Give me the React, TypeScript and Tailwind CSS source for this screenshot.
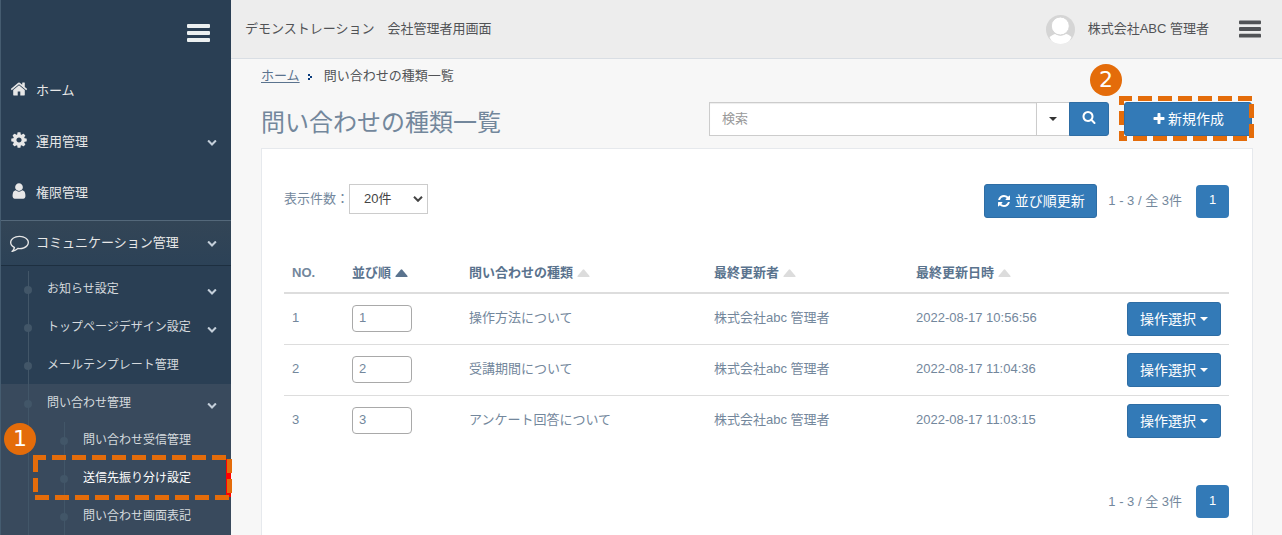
import { useState } from 'react';

const ICONS = {
  home: 'M1472 992v480q0 26-19 45t-45 19h-384v-384h-256v384h-384q-26 0-45-19t-19-45v-480q0-1 .5-3t.5-3l575-474 575 474q1 2 1 6zm223-69l-62 74q-8 9-21 11h-3q-13 0-21-7l-692-577-692 577q-12 8-24 7-13-2-21-11l-62-74q-8-10-7-23.5t11-21.5l719-599q32-26 76-26t76 26l244 204v-195q0-14 9-23t23-9h192q14 0 23 9t9 23v408l219 182q10 8 11 21.5t-7 23.5z',
  cog: 'M1152 896q0-106-75-181t-181-75-181 75-75 181 75 181 181 75 181-75 75-181zm512-109v222q0 12-8 23t-20 13l-185 28q-19 54-39 91 35 50 107 138 10 12 10 25t-9 23q-27 37-99 108t-94 71q-12 0-26-9l-138-108q-44 23-91 38-16 136-29 186-7 28-36 28h-222q-14 0-24.5-8.5t-11.5-21.5l-28-184q-49-16-90-37l-141 107q-10 9-25 9-14 0-25-11-126-114-165-168-7-10-7-23 0-12 8-23 15-21 51-66.5t54-70.5q-27-50-41-99l-183-27q-13-2-21-12.5t-8-23.5v-222q0-12 8-23t19-13l186-28q14-46 39-92-40-57-107-138-10-12-10-24 0-10 9-23 26-36 98.5-107.5t94.5-71.5q13 0 26 10l138 107q44-23 91-38 16-136 29-186 7-28 36-28h222q14 0 24.5 8.5t11.5 21.5l28 184q49 16 90 37l142-107q9-9 24-9 13 0 25 10 129 119 165 170 7 8 7 22 0 12-8 23-15 21-51 66.5t-54 70.5q26 50 41 98l183 28q13 2 21 12.5t8 23.5z',
  user: 'M1536 1399q0 109-62.5 187t-150.5 78h-854q-88 0-150.5-78t-62.5-187q0-85 8.5-160.5t31.5-152 58.5-131 94-89 134.5-34.5q131 128 313 128t313-128q76 0 134.5 34.5t94 89 58.5 131 31.5 152 8.5 160.5zm-256-887q0 159-112.5 271.5t-271.5 112.5-271.5-112.5-112.5-271.5 112.5-271.5 271.5-112.5 271.5 112.5 112.5 271.5z',
  comment: 'M896 384q-204 0-381.5 69.5t-282 187.5-104.5 255q0 112 71.5 213.5t201.5 175.5l87 50-27 96q-24 91-70 172 152-63 275-171l43-38 57 6q69 8 130 8 204 0 381.5-69.5t282-187.5 104.5-255-104.5-255-282-187.5-381.5-69.5zm896 512q0 174-120 321.5t-326 233-450 85.5q-70 0-145-8-198 175-460 242-49 14-114 22h-5q-15 0-27-10.5t-16-27.5v-1q-3-4-.5-12t2-10 4.5-9.5l6-9 7-8.5 8-9q7-8 31-34.5t34.5-38 31-39.5 32.5-51 27-59 26-76q-157-89-247.5-220t-90.5-281q0-130 71-248.5t191-204.5 286-136.5 348-50.5 348 50.5 286 136.5 191 204.5 71 248.5z',
  chevron: 'M1683 808l-742 741q-19 19-45 19t-45-19l-742-741q-19-19-19-45.5t19-45.5l166-165q19-19 45-19t45 19l531 531 531-531q19-19 45-19t45 19l166 165q19 19 19 45.5t-19 45.5z',
  search: 'M1216 832q0-185-131.5-316.5t-316.5-131.5-316.5 131.5-131.5 316.5 131.5 316.5 316.5 131.5 316.5-131.5 131.5-316.5zm512 832q0 52-38 90t-90 38q-54 0-90-38l-343-342q-179 124-399 124-143 0-273.5-55.5t-225-150-150-225-55.5-273.5 55.5-273.5 150-225 225-150 273.5-55.5 273.5 55.5 225 150 150 225 55.5 273.5q0 220-124 399l343 343q37 37 37 90z',
  refresh: 'M1639 1056q0 5-1 7-64 268-268 434.5t-478 166.5q-146 0-282.5-55t-243.5-157l-129 129q-19 19-45 19t-45-19-19-45v-448q0-26 19-45t45-19h448q26 0 45 19t19 45-19 45l-137 137q71 66 161 102t187 36q134 0 250-65t186-179q11-17 53-117 8-23 30-23h192q13 0 22.5 9.5t9.5 22.5zm25-800v448q0 26-19 45t-45 19h-448q-26 0-45-19t-19-45 19-45l138-138q-148-137-349-137-134 0-250 65t-186 179q-11 17-53 117-8 23-30 23h-199q-13 0-22.5-9.5t-9.5-22.5v-7q65-268 270-434.5t480-166.5q146 0 284 55.5t245 156.5l130-129q19-19 45-19t45 19 19 45z',
  plus: 'M1600 736v192q0 40-28 68t-68 28h-416v416q0 40-28 68t-68 28h-192q-40 0-68-28t-28-68v-416h-416q-40 0-68-28t-28-68v-192q0-40 28-68t68-28h416v-416q0-40 28-68t68-28h192q40 0 68 28t28 68v416h416q40 0 68 28t28 68z',
};

type IconName = keyof typeof ICONS;

function Icon({ name, className }: { name: IconName; className?: string }) {
  return (
    <svg viewBox="0 0 1792 1792" fill="currentColor" className={className} aria-hidden="true">
      <path d={ICONS[name]} />
    </svg>
  );
}

function Bars({ className }: { className?: string }) {
  return (
    <svg viewBox="0 0 23 18" fill="currentColor" className={className} aria-hidden="true">
      <rect width="23" height="4" rx="1" />
      <rect y="7" width="23" height="4" rx="1" />
      <rect y="14" width="23" height="4" rx="1" />
    </svg>
  );
}

const mainMenu: { icon: IconName; label: string; open?: boolean }[] = [
  { icon: 'home', label: 'ホーム' },
  { icon: 'cog', label: '運用管理', open: true },
  { icon: 'user', label: '権限管理' },
];

const subMenu = [
  { label: 'お知らせ設定', arrow: true },
  { label: 'トップページデザイン設定', arrow: true },
  { label: 'メールテンプレート管理', arrow: false },
];

const inquiryMenu = ['問い合わせ受信管理', '送信先振り分け設定', '問い合わせ画面表記'];

const rows = [
  { no: 1, type: '操作方法について', user: '株式会社abc 管理者', date: '2022-08-17 10:56:56' },
  { no: 2, type: '受講期間について', user: '株式会社abc 管理者', date: '2022-08-17 11:04:36' },
  { no: 3, type: 'アンケート回答について', user: '株式会社abc 管理者', date: '2022-08-17 11:03:15' },
];

function Dot({ className }: { className: string }) {
  return <span className={`absolute top-1/2 size-2 -translate-y-[3px] rounded-full bg-[#425668] ${className}`} />;
}

function Sidebar() {
  return (
    <nav className="flex w-[231px] shrink-0 flex-col border-l border-[#455c70] bg-[#2a3f54] text-[#e7e7e7]">
      <div className="flex h-[65px] shrink-0 justify-end pt-6 pr-[21px]">
        <Bars className="h-[18px] w-[23px] text-[#ecf0f1]" />
      </div>

      {mainMenu.map((item) => (
        <div key={item.label} className="flex h-[51px] shrink-0 items-center pr-[14px] pl-[9px] text-[13px]">
          <Icon name={item.icon} className="-mt-1 size-[18px]" />
          <span className="ml-2 flex-1">{item.label}</span>
          {item.open && <Icon name="chevron" className="size-2.5 text-[#c4cfda]" />}
        </div>
      ))}

      <div className="mt-[2px] flex h-[46px] shrink-0 items-center border-t border-b border-t-[#54687a] border-b-[#1d2f40] bg-linear-to-b from-[#334556] to-[#2c4257] pr-[14px] pl-[9px] text-[13px]">
        <Icon name="comment" className="-mt-0.5 size-[19px]" />
        <span className="ml-[7px] flex-1">コミュニケーション管理</span>
        <Icon name="chevron" className="size-2.5 text-[#c4cfda]" />
      </div>

      <div className="relative mt-1 flex-1 text-xs text-[#d5dade]">
        {subMenu.map((item) => (
          <div key={item.label} className="relative flex h-[38px] items-center pr-[14px] pl-[46px]">
            <Dot className="left-[23px]" />
            <span className="flex-1">{item.label}</span>
            {item.arrow && <Icon name="chevron" className="mt-1 size-2.5 text-[#c4cfda]" />}
          </div>
        ))}
        <div className="bg-[#394a5d]">
          <div className="relative flex h-[37px] items-center pr-[14px] pl-[46px]">
            <Dot className="left-[23px]" />
            <span className="flex-1">問い合わせ管理</span>
            <Icon name="chevron" className="mt-1 size-2.5 text-[#c4cfda]" />
          </div>
          <div className="relative">
            {inquiryMenu.map((label, i) => (
              <div
                key={label}
                className={
                  i === 1
                    ? 'relative flex h-[38px] items-center border-r-[5px] border-[#ff0000] pl-[82px] text-white'
                    : 'relative flex h-[38px] items-center pl-[82px]'
                }
              >
                <Dot className="left-[59px]" />
                {label}
              </div>
            ))}
            <span className="absolute top-px bottom-0 left-[63px] w-px bg-[#425668]" />
          </div>
        </div>
        <span className="absolute top-px bottom-0 left-[27px] w-px bg-[#425668]" />
      </div>
    </nav>
  );
}

function TopBar() {
  return (
    <header className="flex h-[59px] shrink-0 items-center border-b border-[#d9dee4] bg-[#ededed] pr-[21px] pl-[14px] text-[13px] text-[#515356]">
      <span className="flex-1 whitespace-pre">デモンストレーション　会社管理者用画面</span>
      <svg viewBox="0 0 29 29" className="size-[29px]" aria-hidden="true">
        <clipPath id="avatar">
          <circle cx="14.5" cy="14.5" r="14.5" />
        </clipPath>
        <g clipPath="url(#avatar)">
          <rect width="29" height="29" fill="#d5d5d5" />
          <path d="M3.5 22Q8 19 9 19q5.500 3.500 11 0q2 0 5.500 3L22 29H7z" fill="#fff" />
          <circle cx="14.300" cy="11" r="9" fill="#fff" stroke="#d5d5d5" />
        </g>
      </svg>
      <span className="ml-[13px]">株式会社ABC 管理者</span>
      <Bars className="ml-[30px] h-[18px] w-[22px] text-[#515356]" />
    </header>
  );
}

function Caret({ className }: { className: string }) {
  return <span className={`inline-block border-x-4 border-t-4 border-x-transparent ${className}`} />;
}

function SortMark({ active }: { active?: boolean }) {
  return (
    <svg
      viewBox="0 0 13 8"
      className={active ? 'ml-1 inline h-2 w-[13px] text-[#5a738e]' : 'ml-1 inline h-2 w-[13px] text-[#dcdcdc]'}
      aria-hidden="true"
    >
      <path d="M1 8Q0 8 .5 7L5.700 .7Q6.500 0 7.300 .7L12.500 7Q13 8 12 8z" fill="currentColor" />
    </svg>
  );
}

function Pager() {
  return (
    <>
      <span className="mr-[14px]">1 - 3 / 全 3件</span>
      <button className="h-[33px] w-[33px] rounded bg-[#337ab7] pb-0.5 text-white">1</button>
    </>
  );
}

function InquiryTable() {
  return (
    <table className="w-full table-fixed border-collapse text-left">
      <colgroup>
        <col className="w-[60px]" />
        <col className="w-[117px]" />
        <col className="w-[245px]" />
        <col className="w-[202px]" />
        <col className="w-[211px]" />
        <col className="w-[110px]" />
      </colgroup>
      <thead>
        <tr className="h-10 border-b-2 border-[#ddd] text-[#5a738e]">
          <th className="px-2 text-[#73879c]">NO.</th>
          <th className="px-2">並び順<SortMark active /></th>
          <th className="px-2">問い合わせの種類<SortMark /></th>
          <th className="px-2">最終更新者<SortMark /></th>
          <th className="px-2">最終更新日時<SortMark /></th>
          <th />
        </tr>
      </thead>
      <tbody>
        {rows.map((row, i) => (
          <tr key={row.no} className={i === 0 ? 'h-[51px]' : 'h-[51px] border-t border-[#ddd]'}>
            <td className="px-2 pb-0.5">{row.no}</td>
            <td className="px-2">
              <input
                defaultValue={row.no}
                className="block h-[27px] w-[60px] rounded-sm border border-[#a9a9a9] bg-white px-1.5 pb-0.5"
              />
            </td>
            <td className="px-2 pb-0.5">{row.type}</td>
            <td className="px-2 pb-0.5">{row.user}</td>
            <td className="px-2 pb-0.5">{row.date}</td>
            <td className="px-2">
              <button className="flex h-[34px] w-[94px] items-center justify-center rounded-[3px] border border-[#2e6da4] bg-[#337ab7] text-sm text-white">
                操作選択
                <Caret className="ml-1 border-t-white" />
              </button>
            </td>
          </tr>
        ))}
      </tbody>
    </table>
  );
}

function Marker({ n, className }: { n: number; className: string }) {
  return (
    <span
      className={`absolute flex size-8 items-center justify-center rounded-full bg-[#e46c0a] font-['DejaVu_Sans'] text-[22px] leading-none text-white ${className}`}
    >
      {n}
    </span>
  );
}

export default function App() {
  const [keyword, setKeyword] = useState('');

  return (
    <div className="relative flex h-[535px] w-[1282px] overflow-hidden bg-[#f7f7f7] font-['Liberation_Sans','Noto_Sans_CJK_JP',sans-serif] text-[13px] leading-[18px] text-[#73879c]">
      <Sidebar />
      <div className="flex min-w-0 flex-1 flex-col">
        <TopBar />
        <main className="flex flex-1 flex-col px-[30px]">
          <div className="mt-2 flex h-[18px] items-center text-[#515356]">
            <a className="text-[#5a738e] underline underline-offset-2">ホーム</a>
            <svg viewBox="0 0 4 6" className="mt-0.5 ml-2 h-1.5 w-1" shapeRendering="crispEdges" aria-hidden="true">
              <path d="M0 0h2v2h2v2h-2v2h-2v-2h2v-2h-2z" fill="#0b3c7d" />
            </svg>
            <span className="ml-3">問い合わせの種類一覧</span>
          </div>

          <div className="mt-[17px] flex h-[34px]">
            <h1 className="mt-1 flex-1 text-2xl leading-[34px]">問い合わせの種類一覧</h1>
            <input
              value={keyword}
              onChange={(e) => setKeyword(e.target.value)}
              placeholder="検索"
              className="w-[328px] border border-[#ccc] bg-white px-3 shadow-[inset_0_1px_1px_rgba(0,0,0,0.075)] placeholder:text-[#999]"
            />
            <button className="-ml-px flex w-[34px] items-center justify-center border border-[#ccc] bg-white">
              <Caret className="border-t-[#333]" />
            </button>
            <button className="-ml-px flex w-10 items-center justify-center rounded-r-[3px] border border-[#2e6da4] bg-[#337ab7] text-white">
              <Icon name="search" className="-mt-1 size-[14px]" />
            </button>
            <button className="ml-[15px] flex w-32 items-center justify-center rounded-[3px] border border-[#2e6da4] bg-[#337ab7] text-sm text-white">
              <Icon name="plus" className="mr-0.5 size-[14px]" />
              新規作成
            </button>
          </div>

          <section className="mt-3 mr-[-1px] flex-1 border border-b-0 border-[#e6e9ed] bg-white pt-[35px] pr-[23px] pl-[22px]">
            <div className="flex h-[34px] items-center">
              <span className="-mt-1">表示件数：</span>
              <div className="-mt-1 flex h-[30px] w-[79px] items-center border border-[#ccc] pr-1 pl-[14px] text-[#444]">
                <span className="flex-1">20件</span>
                <svg viewBox="0 0 10 6" className="h-1.5 w-2.5" fill="none" stroke="#444" strokeWidth="2" aria-hidden="true">
                  <path d="M1 .8l4 4 4-4" />
                </svg>
              </div>
              <button className="ml-auto flex h-[34px] w-[113px] items-center justify-center rounded-[3px] border border-[#2e6da4] bg-[#337ab7] text-sm text-white">
                <Icon name="refresh" className="mr-1 size-[14px]" />
                並び順更新
              </button>
              <span className="ml-[11px] flex items-center">
                <Pager />
              </span>
            </div>

            <div className="mt-[35px]">
              <InquiryTable />
            </div>

            <div className="mt-[39px] flex items-center justify-end">
              <Pager />
            </div>
          </section>
        </main>
      </div>

      {/* numbered guide marks over the screen */}
      <svg className="absolute inset-0 h-full w-full" fill="none" stroke="#e46c0a" strokeWidth="5" strokeDasharray="14 6" aria-hidden="true">
        <path d="M226 457.500H33M35.500 458V492M35 497.500H229M229.500 459V493" />
        <path d="M1252 98.500H1119M1251.500 104V138M1247 138.500H1119M1121.500 96V105M1121.500 111V125M1121.500 131V141" />
      </svg>
      <Marker n={1} className="top-[423px] left-1" />
      <Marker n={2} className="top-16 left-[1090px]" />
    </div>
  );
}
